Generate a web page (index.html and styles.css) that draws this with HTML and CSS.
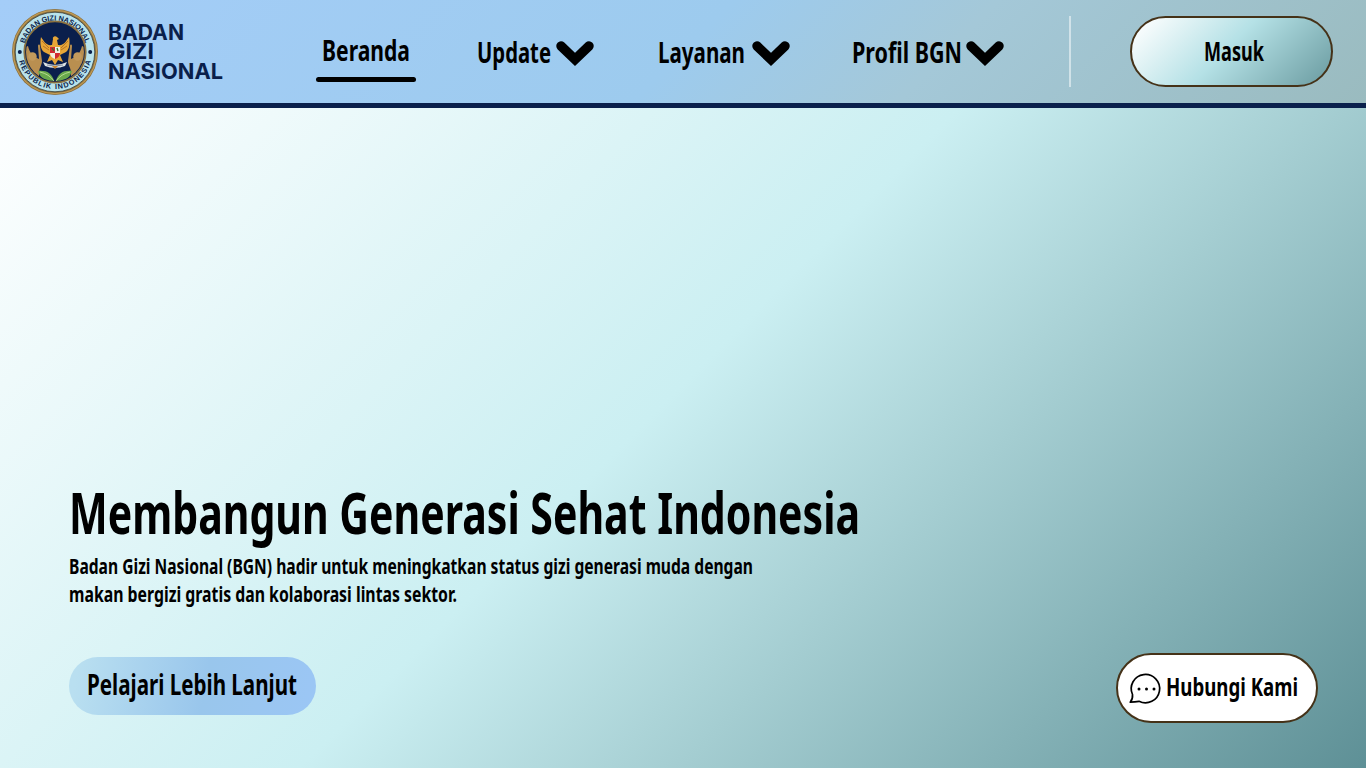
FILE: index.html
```html
<!DOCTYPE html>
<html lang="id">
<head>
<meta charset="utf-8">
<title>Badan Gizi Nasional</title>
<link rel="stylesheet" href="styles.css">
</head>
<body>
<div class="page">
  <header class="header">
    <a class="brand">
      <svg class="emblem" width="88" height="88" viewBox="0 0 88 88">
        <defs>
          <path id="arc-top" d="M12.4 44a31.6 31.6 0 0 1 63.2 0"/>
          <path id="arc-bottom" d="M7 44a37 37 0 0 0 74 0"/>
          <clipPath id="disc"><circle cx="44" cy="44" r="29"/></clipPath>
        </defs>
        <circle cx="44" cy="44" r="43" fill="#8b713f"/>
        <circle cx="44" cy="44" r="41.6" fill="none" stroke="#c09a54" stroke-width="1.2"/>
        <circle cx="44" cy="44" r="39.8" fill="#b9e3ec" stroke="#3b4240" stroke-width=".8"/>
        <circle cx="44" cy="44" r="30.7" fill="#0a1f4c" stroke="#8b713f" stroke-width="1.8"/>
        <g clip-path="url(#disc)">
          <path d="M17 38c2 8 5 10 11 13l-1-13c0-2 2-2 2 0l2 15c0 4-3 7-3 12v10L12 65V40z" fill="#b98f50"/>
          <path d="M71 38c-2 8-5 10-11 13l1-13c0-2-2-2-2 0l-2 15c0 4 3 7 3 12v10l16-10V40z" fill="#b98f50"/>
          <circle cx="21.5" cy="48.500" r="4.200" fill="#c39a5c"/>
          <circle cx="66.500" cy="48.500" r="4.200" fill="#c39a5c"/>
          <path d="M43 73c-8 1-14-3-16-10 8-1 14 2 16 10z" fill="#69a84c"/>
          <path d="M45 73c8 1 14-3 16-10-8-1-14 2-16 10z" fill="#69a84c"/>
          <path d="M29 64q9 2 14 9M59 64q-9 2-14 9" fill="none" stroke="#b6dc8f" stroke-width="1"/>
        </g>
        <path d="M42 31c-1-2 2-4 4-2l2 2-2 1 1 5c6 1 8-4 11-8 1 5 1 12-3 15l-6 3 3 7-5-2-3 5-3-5-5 2 3-7-6-3c-4-3-4-10-3-15 3 4 5 9 11 8z" fill="#e6a637"/>
        <path d="M31 33l7 7M32 38l6 4M57 33l-7 7M56 38l-6 4" stroke="#aa6722" stroke-width=".8"/>
        <path d="M39 39h5v6h-5z" fill="#d12b32"/><path d="M44 39h5v6h-5z" fill="#eff2e6"/>
        <path d="M39 45h5v6c-3-1-5-3-5-6z" fill="#f1efdf"/><path d="M44 45h5c0 3-2 5-5 6z" fill="#d12b32"/>
        <path d="M41 40l2 3M46 40l1 3" stroke="#37722f" stroke-width="1.300"/>
        <path d="M32 54q12 6 24 0l-2 4q-10 4-20 0z" fill="#dce3e4"/>
        <path d="M36 57q8 2 16 0" fill="none" stroke="#59657c" stroke-width=".7"/>
        <path d="M41 58l3 3 3-3z" fill="#c9852f"/>
        <circle cx="8.800" cy="44" r="2" fill="#0a1f4c"/><circle cx="79.200" cy="44" r="2" fill="#0a1f4c"/>
        <text class="ring-text"><textPath href="#arc-top" startOffset="50%" text-anchor="middle" textLength="82">BADAN GIZI NASIONAL</textPath></text>
        <text class="ring-text"><textPath href="#arc-bottom" startOffset="50%" text-anchor="middle" textLength="98">REPUBLIK INDONESIA</textPath></text>
      </svg>
      <svg class="wordmark" width="116" height="60">
        <text x="0" y="18.500" textLength="76" lengthAdjust="spacingAndGlyphs">BADAN</text>
        <text x="0" y="38" textLength="46" lengthAdjust="spacingAndGlyphs">GIZI</text>
        <text x="0" y="57.500" textLength="115" lengthAdjust="spacingAndGlyphs">NASIONAL</text>
      </svg>
    </a>
    <nav class="nav">
      <a class="nav-item active"><svg class="label" width="88" height="38"><text x="0" y="23" textLength="88" lengthAdjust="spacingAndGlyphs">Beranda</text></svg></a>
      <a class="nav-item update"><svg class="label" width="74" height="38"><text x="0" y="23" textLength="74" lengthAdjust="spacingAndGlyphs">Update</text></svg><svg class="chevron" width="38" height="26" viewBox="0 0 38 26"><path d="M5 5l14 13.500L33 5"/></svg></a>
      <a class="nav-item layanan"><svg class="label" width="87" height="38"><text x="0" y="23" textLength="87" lengthAdjust="spacingAndGlyphs">Layanan</text></svg><svg class="chevron" width="38" height="26" viewBox="0 0 38 26"><path d="M5 5l14 13.500L33 5"/></svg></a>
      <a class="nav-item profil"><svg class="label" width="110" height="38"><text x="0" y="23" textLength="110" lengthAdjust="spacingAndGlyphs">Profil BGN</text></svg><svg class="chevron" width="38" height="26" viewBox="0 0 38 26"><path d="M5 5l14 13.500L33 5"/></svg></a>
    </nav>
    <span class="divider"></span>
    <a class="login"><svg class="label" width="60" height="32"><text x="0" y="23" textLength="60" lengthAdjust="spacingAndGlyphs">Masuk</text></svg></a>
  </header>
  <main class="hero">
    <h1 class="title"><svg width="792" height="60"><text x="0" y="44" textLength="791" lengthAdjust="spacingAndGlyphs">Membangun Generasi Sehat Indonesia</text></svg></h1>
    <p class="intro"><svg width="690" height="56">
      <text x="0" y="20" textLength="684" lengthAdjust="spacingAndGlyphs">Badan Gizi Nasional (BGN) hadir untuk meningkatkan status gizi generasi muda dengan</text>
      <text x="0" y="48" textLength="388" lengthAdjust="spacingAndGlyphs">makan bergizi gratis dan kolaborasi lintas sektor.</text>
    </svg></p>
    <div class="actions">
      <a class="more"><svg class="label" width="210" height="34"><text x="0" y="25" textLength="210" lengthAdjust="spacingAndGlyphs">Pelajari Lebih Lanjut</text></svg></a>
      <a class="contact">
        <svg class="chat" width="32" height="32" viewBox="0 0 32 32"><path d="M3.500 21.500A14.200 14.200 0 1 1 10 28.300Q6 29 1.200 29.200Q4 26 3.500 21.500z"/><circle cx="10" cy="16" r="1.500"/><circle cx="17.500" cy="16" r="1.500"/><circle cx="25" cy="16" r="1.500"/></svg>
        <svg class="label" width="132" height="32"><text x="0" y="23" textLength="132" lengthAdjust="spacingAndGlyphs">Hubungi Kami</text></svg>
      </a>
    </div>
  </main>
</div>
</body>
</html>
```
FILE: styles.css
```css
* { box-sizing: border-box; }
body { margin: 0; font-family: "Noto Sans", "Open Sans", sans-serif; font-stretch: condensed; font-weight: 700; color: #000; }
svg { display: block; overflow: visible; flex: none; }
.page { width: 1366px; height: 768px; overflow: hidden; display: flex; flex-direction: column; background: linear-gradient(135deg, #fff 4%, #cbeff2 50%, #5e9096 100%); }
.header { height: 108px; flex: none; display: flex; align-items: flex-start; border-bottom: 5px solid #0a204c; background: linear-gradient(135deg, #a4cdf8 0%, #9dcbee 50%, #a4c8d8 68%, #9abbbf 100%); }
.brand { display: flex; width: 315px; padding: 8px 0 0 11px; }
.wordmark { margin: 13px 0 0 9px; font-family: Inter, sans-serif; font-stretch: normal; font-size: 22px; font-weight: 700; fill: #0a1f4c; }
.ring-text { font-family: "Liberation Sans", sans-serif; font-size: 7.300px; font-weight: 700; fill: #0a1f4c; }
.nav { display: flex; width: 754px; }
.nav-item { display: flex; padding-top: 40px; font-size: 28px; }
.active { width: 101px; height: 82px; padding: 38px 0 0 7px; background: linear-gradient(#000, #000) no-repeat 1px 77px / 0 0; flex-direction: column; }
.active::after { content: ""; width: 100px; height: 5px; margin: 1px 0 0 -6px; border-radius: 3px; background: #000; }
.update { margin-left: 61px; gap: 5px; }
.layanan { margin-left: 64px; gap: 7px; }
.profil { margin-left: 62px; gap: 4px; }
.chevron { margin-top: 1px; fill: none; stroke: #000; stroke-width: 9.500; stroke-linecap: round; }
.divider { width: 2px; height: 71px; margin-top: 16px; background: rgba(255, 255, 255, .5); }
.login { display: flex; width: 203px; height: 71px; margin: 16px 0 0 59px; padding: 20px 0 0 72px; border: 2px solid #453218; border-radius: 36px; background: linear-gradient(135deg, #fff 3%, #b5e1e6 47%, #6a9ba0 100%); font-size: 26px; }
.hero { flex: 1; display: flex; flex-direction: column; justify-content: flex-end; padding: 0 48px 45px 69px; }
.title { margin: 0 0 4px; font-size: 57px; }
.intro { margin: 0 0 43px; font-size: 20.500px; }
.actions { display: flex; justify-content: space-between; height: 70px; }
.more { width: 247px; height: 58px; margin-top: 4px; padding: 13px 0 0 18px; border-radius: 29px; background: linear-gradient(100deg, #b9dff0 4%, #99c6ec 55%, #9bc6f5 100%); font-size: 28px; }
.contact { display: flex; width: 202px; height: 70px; padding: 18px 0 0 11px; gap: 5px; border: 2px solid #453218; border-radius: 35px; background: #fff; font-size: 25.500px; }
.chat path { fill: none; stroke: #000; stroke-width: 1.700; stroke-linejoin: round; }
```
